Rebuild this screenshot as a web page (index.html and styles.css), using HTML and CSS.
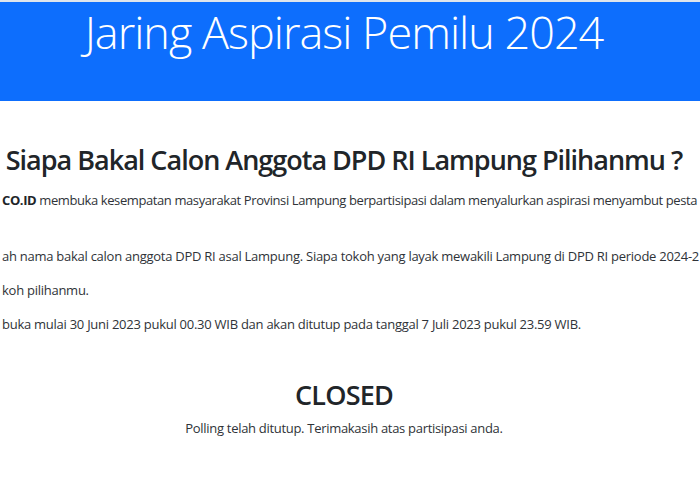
FILE: index.html
```html
<!DOCTYPE html>
<html lang="id">
<head>
<meta charset="utf-8">
<title>Jaring Aspirasi Pemilu 2024</title>
<link rel="stylesheet" href="styles.css">
</head>
<body>
<header class="banner">
  <div class="wrap">
    <h1 class="banner-title">Jaring Aspirasi Pemilu 2024</h1>
  </div>
</header>
<main class="wrap content">
  <h2 class="question">Siapa Bakal Calon Anggota DPD RI Lampung Pilihanmu ?</h2>
  <p class="line line-first"><strong>CO.ID</strong> membuka kesempatan masyarakat Provinsi Lampung berpartisipasi dalam menyalurkan aspirasi menyambut pesta</p>
  <p class="line line-gap">ah nama bakal calon anggota DPD RI asal Lampung. Siapa tokoh yang layak mewakili Lampung di DPD RI periode 2024-2</p>
  <p class="line">koh pilihanmu.</p>
  <p class="line">buka mulai 30 Juni 2023 pukul 00.30 WIB dan akan ditutup pada tanggal 7 Juli 2023 pukul 23.59 WIB.</p>
  <section class="status">
    <h3 class="status-title">CLOSED</h3>
    <p class="status-text">Polling telah ditutup. Terimakasih atas partisipasi anda.</p>
  </section>
</main>
</body>
</html>
```

FILE: styles.css
```css
html, body {
  margin: 0;
  padding: 0;
  background: #ffffff;
  overflow: hidden;
}
body {
  font-family: "Open Sans", Lato, sans-serif;
  color: #212529;
  width: 700px;
  height: 500px;
}
.wrap {
  width: 688px;
}
.banner {
  border-top: 2px solid #dfe5ec;
  background: #0d6efd;
  height: 99px;
}
.banner-title {
  margin: 0;
  padding-top: 2px;
  font-weight: 300;
  font-size: 45px;
  line-height: 56px;
  letter-spacing: -1px;
  color: #ffffff;
  text-align: center;
  white-space: nowrap;
}
.question {
  margin: 42px 0 0 0;
  font-size: 27px;
  line-height: 34px;
  font-weight: 600;
  letter-spacing: -1px;
  text-align: center;
  white-space: nowrap;
}
.line {
  margin: 12px 0 0 2px;
  font-size: 13px;
  line-height: 22px;
  letter-spacing: -0.26px;
  white-space: nowrap;
  color: #2f3338;
}
.line-first {
  margin-top: 12px;
  letter-spacing: -0.4px;
}
.line-gap {
  margin-top: 34px;
}
.line strong {
  font-weight: 700;
  color: #212529;
}
.status {
  margin-top: 44px;
  text-align: center;
}
.status-title {
  margin: 0;
  font-size: 27px;
  line-height: 32px;
  font-weight: 600;
  letter-spacing: -0.8px;
}
.status-text {
  margin: 7px 0 0 0;
  font-size: 13px;
  line-height: 20px;
  letter-spacing: -0.3px;
  color: #2f3338;
}
```
